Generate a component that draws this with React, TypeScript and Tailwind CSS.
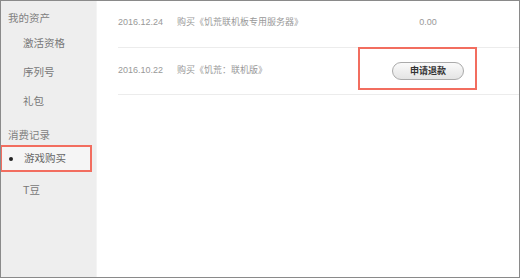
import React from "react";

const font = { fontFamily: '"Liberation Sans", "Noto Sans CJK SC", sans-serif' };

export default function App() {
  return (
    <div
      className="w-[520px] h-[278px] border border-[#8a8a8a] flex bg-white overflow-hidden"
      style={font}
    >
      {/* Sidebar */}
      <div className="w-[96px] h-full bg-[#eeeeee] border-r border-[#f4f4f4] flex flex-col text-[10.5px]">
        <div className="mt-[10px] leading-[14px] pl-[7px] text-[#808080]">我的资产</div>
        <div className="mt-[11px] leading-[14px] pl-[22px] text-[#777]">激活资格</div>
        <div className="mt-[15px] leading-[14px] pl-[22px] text-[#777]">序列号</div>
        <div className="mt-[15px] leading-[14px] pl-[22px] text-[#777]">礼包</div>
        <div className="mt-[20px] leading-[14px] pl-[7px] text-[#808080]">消费记录</div>
        <div className="mt-[3px] -ml-px w-[92px] h-[27px] border-2 border-[#f26d5f] bg-[#f5f5f5] flex items-center">
          <span className="ml-[7px] w-[4px] h-[4px] rounded-full bg-[#222]" />
          <span className="ml-[11px] text-[#666]">游戏购买</span>
        </div>
        <div className="mt-[11px] leading-[14px] pl-[22px] text-[#777]">T豆</div>
      </div>

      {/* Main */}
      <div className="flex-1 flex flex-col pl-[21px] text-[9px] text-[#999]">
        <div className="h-[47px] pr-[23px] border-b border-[#ececec] flex items-center pb-[2px]">
          <div className="w-[59px]">2016.12.24</div>
          <div className="flex-1">购买《饥荒联机板专用服务器》</div>
          <div className="w-[136px] text-center">0.00</div>
        </div>
        <div className="relative h-[47px] pr-[23px] border-b border-[#ececec] flex items-center">
          <div className="w-[59px]">2016.10.22</div>
          <div className="flex-1">购买《饥荒：联机版》</div>
          <div className="w-[136px] flex justify-center">
            <button className="w-[72px] h-[18px] rounded-full border border-[#aaaaaa] bg-gradient-to-b from-[#fafafa] to-[#e4e4e4] text-[9px] font-semibold text-[#333] leading-none">
              申请退款
            </button>
          </div>
          <div className="absolute left-[240px] top-[-1px] w-[119px] h-[43px] border-2 border-[#f26d5f] pointer-events-none" />
        </div>
      </div>
    </div>
  );
}
